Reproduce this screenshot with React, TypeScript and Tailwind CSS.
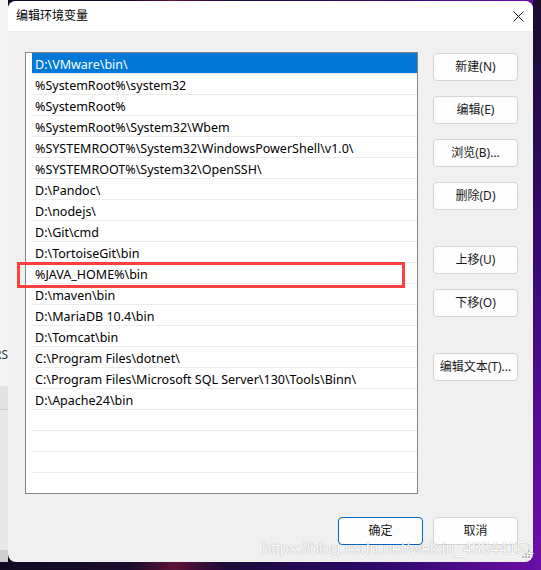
import clsx from "clsx";

const paths = [
  "D:\\VMware\\bin\\",
  "%SystemRoot%\\system32",
  "%SystemRoot%",
  "%SystemRoot%\\System32\\Wbem",
  "%SYSTEMROOT%\\System32\\WindowsPowerShell\\v1.0\\",
  "%SYSTEMROOT%\\System32\\OpenSSH\\",
  "D:\\Pandoc\\",
  "D:\\nodejs\\",
  "D:\\Git\\cmd",
  "D:\\TortoiseGit\\bin",
  "%JAVA_HOME%\\bin",
  "D:\\maven\\bin",
  "D:\\MariaDB 10.4\\bin",
  "D:\\Tomcat\\bin",
  "C:\\Program Files\\dotnet\\",
  "C:\\Program Files\\Microsoft SQL Server\\130\\Tools\\Binn\\",
  "D:\\Apache24\\bin",
  "",
  "",
  "",
  "",
];

const font = "font-['Noto_Sans','Noto_Sans_CJK_SC',sans-serif]";

const DialogButton = ({ label, primary = false, className }: { label: string; primary?: boolean; className?: string }) => (
  <button
    className={clsx(
      "flex h-[28px] w-[85px] items-center justify-center rounded-[4px] border bg-[#fdfdfd] text-[12px] text-[#1a1a1a]",
      primary ? "border-[#0067c0]" : "border-[#d4d4d4]",
      className,
    )}
  >
    {label}
  </button>
);

const CloseIcon = () => (
  <svg width="11" height="11" viewBox="0 0 11 11" fill="none" stroke="#1a1a1a" strokeWidth="1">
    <path d="M0.5 0.5L10.5 10.5M10.5 0.5L0.5 10.5" />
  </svg>
);

const ResizeGrip = () => (
  <svg width="8" height="8" viewBox="0 0 8 8" fill="#b8b8b8">
    <rect x="6" y="0" width="2" height="2" />
    <rect x="3" y="3" width="2" height="2" />
    <rect x="6" y="3" width="2" height="2" />
    <rect x="0" y="6" width="2" height="2" />
    <rect x="3" y="6" width="2" height="2" />
    <rect x="6" y="6" width="2" height="2" />
  </svg>
);

export default function App() {
  return (
    <div
      className={clsx(
        "relative flex h-[570px] w-[541px] flex-col overflow-hidden bg-[linear-gradient(to_right,#120a24_0%,#1a0b2e_24%,#5c1238_32%,#1c0a3c_42%,#2e0a6a_70%,#6a0ea8_100%)]",
        font,
      )}
    >
      <div className="flex h-[562px]">
        {/* window behind the dialog, left edge */}
        <div className="flex w-[8px] flex-col overflow-hidden bg-[#f3f3f3]">
          <div className="h-[386px] bg-[#f5f5f5]">
            <div className="mt-[347px] whitespace-nowrap text-[12px] leading-[16px] text-[#333] [direction:rtl]">RS</div>
          </div>
          <div className="h-[24px] border-b border-[#cccccc] bg-[#e2e2e2]" />
          <div className="flex-1 bg-[#e8e8e8]" />
          <div className="h-[12px] bg-[#cfcfcf]" />
        </div>

        {/* dialog */}
        <div className="relative mt-[1px] flex w-[525px] flex-col overflow-hidden rounded-[8px] bg-[#f0f0f0]">
          <div className="flex h-[30px] items-center justify-between bg-white pl-[8px] pr-[9px]">
            <span className="text-[12px] text-black">编辑环境变量</span>
            <CloseIcon />
          </div>

          <div className="flex flex-col pl-[17px] pt-[21px]">
            <div className="flex items-start">
              <div className="h-[442px] w-[393px] overflow-hidden border border-[#848484] bg-white pl-[6px]">
                {paths.map((p, i) => (
                  <div
                    key={i}
                    className={clsx(
                      "h-[21px] border-b border-[#ececec] pl-[3px] text-[12.5px] leading-[24px] whitespace-nowrap",
                      i === 0 ? "bg-[#0078d7] text-white" : "text-black",
                    )}
                  >
                    {p}
                  </div>
                ))}
              </div>

              <div className="ml-[15px] mt-[1px] flex flex-col">
                <DialogButton label="新建(N)" />
                <DialogButton label="编辑(E)" className="mt-[15px]" />
                <DialogButton label="浏览(B)..." className="mt-[15px]" />
                <DialogButton label="删除(D)" className="mt-[15px]" />
                <DialogButton label="上移(U)" className="mt-[36px]" />
                <DialogButton label="下移(O)" className="mt-[15px]" />
                <DialogButton label="编辑文本(T)..." className="mt-[36px]" />
              </div>
            </div>

            <div className="mt-[23px] flex justify-end gap-[10px] pr-[15px]">
              <DialogButton label="确定" primary />
              <DialogButton label="取消" />
            </div>
          </div>

          <div className="absolute bottom-[4px] right-[3px]">
            <ResizeGrip />
          </div>
        </div>

        <div className="w-[8px] bg-[linear-gradient(to_bottom,#1a0b2e,#3a0c78_50%,#6c0eaa)]" />
      </div>

      {/* highlight around the JAVA_HOME entry */}
      <div className="absolute left-[17px] top-[262px] h-[26px] w-[388px] border-[3px] border-[#ff4040]" />

      <div className="absolute left-[262px] top-[541px] whitespace-nowrap font-['Liberation_Sans',Arial,sans-serif] text-[16px] leading-[16px] text-white [text-shadow:0_0_1px_rgba(0,0,0,0.45)]">
        https://blog.csdn.net/weixin_43344151
      </div>
    </div>
  );
}
